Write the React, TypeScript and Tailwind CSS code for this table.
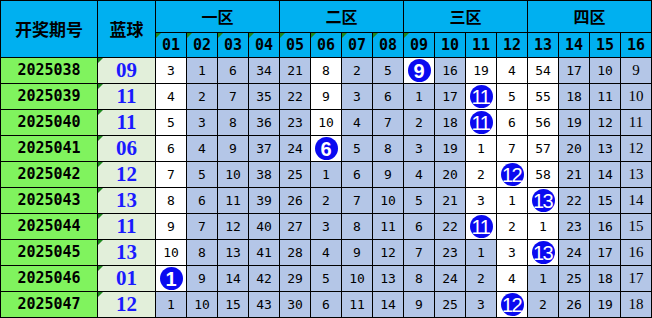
import React from "react";

const rows: { p: string; b: string; n: number[]; ball: number }[] = [
  { p: "2025038", b: "09", n: [3, 1, 6, 34, 21, 8, 2, 5, 9, 16, 19, 4, 54, 17, 10, 9], ball: 8 },
  { p: "2025039", b: "11", n: [4, 2, 7, 35, 22, 9, 3, 6, 1, 17, 11, 5, 55, 18, 11, 10], ball: 10 },
  { p: "2025040", b: "11", n: [5, 3, 8, 36, 23, 10, 4, 7, 2, 18, 11, 6, 56, 19, 12, 11], ball: 10 },
  { p: "2025041", b: "06", n: [6, 4, 9, 37, 24, 6, 5, 8, 3, 19, 1, 7, 57, 20, 13, 12], ball: 5 },
  { p: "2025042", b: "12", n: [7, 5, 10, 38, 25, 1, 6, 9, 4, 20, 2, 12, 58, 21, 14, 13], ball: 11 },
  { p: "2025043", b: "13", n: [8, 6, 11, 39, 26, 2, 7, 10, 5, 21, 3, 1, 13, 22, 15, 14], ball: 12 },
  { p: "2025044", b: "11", n: [9, 7, 12, 40, 27, 3, 8, 11, 6, 22, 11, 2, 1, 23, 16, 15], ball: 10 },
  { p: "2025045", b: "13", n: [10, 8, 13, 41, 28, 4, 9, 12, 7, 23, 1, 3, 13, 24, 17, 16], ball: 12 },
  { p: "2025046", b: "01", n: [1, 9, 14, 42, 29, 5, 10, 13, 8, 24, 2, 4, 1, 25, 18, 17], ball: 0 },
  { p: "2025047", b: "12", n: [1, 10, 15, 43, 30, 6, 11, 14, 9, 25, 3, 12, 2, 26, 19, 18], ball: 11 },
];

// number of rows (from top) that are white in each column
const whiteUntil = [8, -1, -1, -1, -1, 3, -1, -1, 0, -1, 6, 9, 7, -1, -1, -1];

const Tri = () => (
  <span className="absolute left-0 top-0 w-0 h-0 border-t-[5px] border-r-[5px] border-t-[#1e8a1e] border-r-transparent" />
);

const cjk = { fontFamily: '"Noto Sans CJK SC", sans-serif' } as const;

export default function App() {
  return (
    <div className="w-[652px] h-[318px] bg-white">
      <div className="grid grid-cols-[96px_57px_repeat(16,30px)] grid-rows-[31px_24px_repeat(10,25px)] gap-px bg-black p-px w-[652px] h-[318px]">
        <div
          className="row-span-2 bg-[#00b0f0] flex items-center justify-center text-[17px] font-bold text-black"
          style={cjk}
        >
          开奖期号
        </div>
        <div
          className="row-span-2 bg-[#00b0f0] flex items-center justify-center text-[17px] font-bold text-black"
          style={cjk}
        >
          蓝球
        </div>
        {["一区", "二区", "三区", "四区"].map((z) => (
          <div
            key={z}
            className="col-span-4 bg-[#00b0f0] flex items-center justify-center text-[16px] font-bold text-black pb-[2px]"
            style={cjk}
          >
            {z}
          </div>
        ))}
        {Array.from({ length: 16 }, (_, i) => (
          <div
            key={i}
            className="relative bg-[#00b0f0] flex items-center justify-center text-[15px] font-bold text-black font-['DejaVu_Sans_Mono',monospace] pt-[1px]"
          >
            {i < 9 && <Tri />}
            {String(i + 1).padStart(2, "0")}
          </div>
        ))}
        {rows.map((r, ri) => (
          <React.Fragment key={r.p}>
            <div className="bg-[#80f35e] flex items-center justify-center text-[15px] font-bold text-black font-['DejaVu_Sans_Mono',monospace]">
              {r.p}
            </div>
            <div className="relative bg-[#e2efda] flex items-center justify-center text-[21px] font-bold text-[#1a1aff] font-['Liberation_Serif',serif]">
              <Tri />
              {r.b}
            </div>
            {r.n.map((v, ci) => {
              const white = ri <= whiteUntil[ci];
              const isBall = ci === r.ball;
              const last = ci === 15;
              return (
                <div
                  key={ci}
                  className={
                    "flex items-center justify-center text-black " +
                    (white ? "bg-white " : "bg-[#b4c6e7] ") +
                    (last
                      ? "text-[15px] font-['Liberation_Serif',serif] font-normal"
                      : "text-[13px] font-['DejaVu_Sans_Mono',monospace]")
                  }
                >
                  {isBall ? (
                    <span className="w-[23px] h-[23px] rounded-full bg-[#0a0af0] text-white flex items-center justify-center font-['Liberation_Sans',sans-serif] text-[20px] tracking-[-1.5px] leading-none">
                      <span className={v < 10 ? "font-bold tracking-normal" : "pr-[1px]"}>{v}</span>
                    </span>
                  ) : (
                    v
                  )}
                </div>
              );
            })}
          </React.Fragment>
        ))}
      </div>
    </div>
  );
}
